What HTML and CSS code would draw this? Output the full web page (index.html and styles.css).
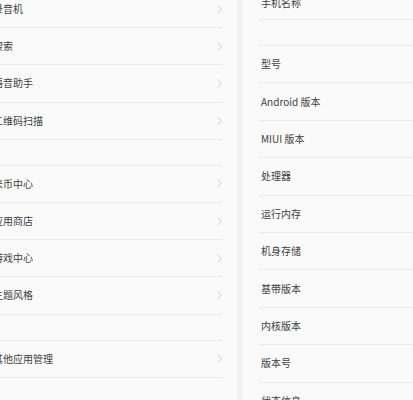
FILE: index.html
```html
<!DOCTYPE html>
<html lang="zh">
<head>
<meta charset="utf-8">
<link rel="stylesheet" href="styles.css">
</head>
<body>
<div class="screen">
  <div class="panel panel-left">
    <div class="list list-left">
      <div class="row first"><span class="label">录音机</span><svg class="chev" viewBox="0 0 5 9"><polyline points="0.6,0.6 4.3,4.5 0.6,8.4"/></svg></div>
      <div class="row"><span class="label">搜索</span><svg class="chev" viewBox="0 0 5 9"><polyline points="0.6,0.6 4.3,4.5 0.6,8.4"/></svg></div>
      <div class="row"><span class="label">语音助手</span><svg class="chev" viewBox="0 0 5 9"><polyline points="0.6,0.6 4.3,4.5 0.6,8.4"/></svg></div>
      <div class="row"><span class="label">二维码扫描</span><svg class="chev" viewBox="0 0 5 9"><polyline points="0.6,0.6 4.3,4.5 0.6,8.4"/></svg></div>
      <div class="gap"></div>
      <div class="row"><span class="label">米币中心</span><svg class="chev" viewBox="0 0 5 9"><polyline points="0.6,0.6 4.3,4.5 0.6,8.4"/></svg></div>
      <div class="row"><span class="label">应用商店</span><svg class="chev" viewBox="0 0 5 9"><polyline points="0.6,0.6 4.3,4.5 0.6,8.4"/></svg></div>
      <div class="row"><span class="label">游戏中心</span><svg class="chev" viewBox="0 0 5 9"><polyline points="0.6,0.6 4.3,4.5 0.6,8.4"/></svg></div>
      <div class="row"><span class="label">主题风格</span><svg class="chev" viewBox="0 0 5 9"><polyline points="0.6,0.6 4.3,4.5 0.6,8.4"/></svg></div>
      <div class="gap"></div>
      <div class="row"><span class="label">其他应用管理</span><svg class="chev" viewBox="0 0 5 9"><polyline points="0.6,0.6 4.3,4.5 0.6,8.4"/></svg></div>
    </div>
  </div>
  <div class="divider-strip"></div>
  <div class="panel panel-right">
    <div class="list list-right">
      <div class="row first"><span class="label">手机名称</span></div>
      <div class="gap"></div>
      <div class="row"><span class="label">型号</span></div>
      <div class="row"><span class="label">Android 版本</span></div>
      <div class="row"><span class="label">MIUI 版本</span></div>
      <div class="row"><span class="label">处理器</span></div>
      <div class="row"><span class="label">运行内存</span></div>
      <div class="row"><span class="label">机身存储</span></div>
      <div class="row"><span class="label">基带版本</span></div>
      <div class="row"><span class="label">内核版本</span></div>
      <div class="row"><span class="label">版本号</span></div>
      <div class="row"><span class="label">状态信息</span></div>
    </div>
  </div>
</div>
</body>
</html>
```
FILE: styles.css
```css
html, body {
  margin: 0;
  padding: 0;
  background: #f9f9f9;
}
body {
  width: 413px;
  height: 400px;
  overflow: hidden;
  font-family: "Noto Sans CJK SC", "Noto Sans", sans-serif;
  font-size: 10px;
  color: #404040;
}
.screen {
  display: flex;
  height: 400px;
}
.panel {
  background: #fafafa;
  overflow: hidden;
}
.panel-left {
  margin-left: -7px;
  width: 244px;
  flex: none;
}
.divider-strip {
  width: 4px;
  flex: none;
  background: #f2f2f2;
  border-right: 1px solid #efefef;
}
.panel-right {
  flex: 1;
}
.list {
  display: flex;
  flex-direction: column;
}
.list-left {
  margin-top: -9px;
  padding-right: 15px;
}
.list-right {
  margin-top: -13px;
  padding-left: 17px;
}
.row {
  height: 37.2px;
  flex: none;
  display: flex;
  align-items: center;
  justify-content: space-between;
  border-bottom: 1px solid #ebebeb;
  box-sizing: border-box;
}
.list-right .row {
  height: 37.4px;
}
.list-right .row.first {
  height: 33px;
}
.label {
  line-height: 1;
  white-space: nowrap;
}
.list-right .label {
  padding-left: 2px;
}
.gap {
  height: 26px;
  flex: none;
  border-bottom: 1px solid #ebebeb;
  box-sizing: border-box;
}
.chev {
  width: 5px;
  height: 9px;
  fill: none;
  stroke: #cbcbcb;
  stroke-width: 0.9;
}
```
